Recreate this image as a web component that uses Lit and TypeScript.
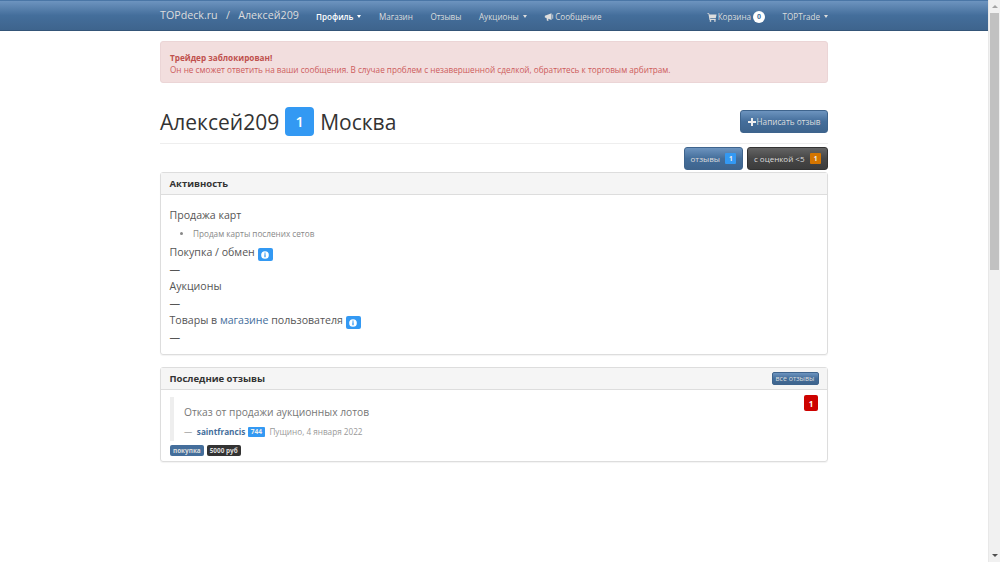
import { LitElement, html, css } from "lit";
import { customElement } from "lit/decorators.js";

const infoIcon = html`<svg class="info-svg" viewBox="0 0 10 10"><circle cx="5" cy="5" r="4.8" fill="#fff"/><rect x="4.2" y="2" width="1.6" height="1.4" fill="#3399f3"/><rect x="4.2" y="4" width="1.6" height="3.8" fill="#3399f3"/></svg>`;

@customElement("app-root")
export class AppRoot extends LitElement {
  static styles = css`
    :host {
      display: block;
      height: 562px;
      overflow: hidden;
      position: relative;
      background: #fff;
      font-family: "Open Sans", sans-serif;
      color: #333;
    }
    .page { width: 988px; }
    .navbar {
      height: 31px;
      box-sizing: border-box;
      background: linear-gradient(#6d94bf, #446e9b 50%, #3e648d);
      border-bottom: 1px solid #345578;
      border-top: 1px solid #4a76a6;
      color: #ddd;
    }
    .nav-inner {
      width: 668px;
      margin: 0 auto;
      display: flex;
      align-items: center;
      height: 100%;
    }
    .brand { font-size: 10.7px; color: #ddd; width: 156px; white-space: pre; margin-bottom: 2px; }
    .nav-link { font-size: 8.1px; color: #ddd; margin-right: 17.5px; padding-top: 2px; display: flex; align-items: center; white-space: pre; }
    .nav-link.active { color: #fff; font-weight: 600; }
    .nav-link.last { margin-right: 0; }
    .caret {
      display: inline-block;
      width: 0;
      height: 0;
      margin-left: 4px;
      border-left: 2.5px solid transparent;
      border-right: 2.5px solid transparent;
      border-top: 3px solid currentColor;
    }
    .spacer { flex: 1; }
    .nav-icon { width: 10px; height: 10px; margin-right: 1px; }
    .cart-badge {
      background: #fff;
      color: #446e9b;
      font-size: 7px;
      font-weight: 700;
      border-radius: 7px;
      width: 12px;
      height: 12px;
      margin-left: 2px;
      display: flex;
      align-items: center;
      justify-content: center;
    }
    .container { width: 668px; margin: 0 auto; }
    .alert {
      margin-top: 10px;
      height: 42px;
      box-sizing: border-box;
      padding: 10px 9px;
      background: #f2dede;
      border: 1px solid #ebd5d6;
      border-radius: 3px;
      color: #cd5c5c;
      font-size: 8.2px;
      line-height: 11.5px;
    }
    .alert b { font-weight: 700; color: #c0504d; display: block; }
    .page-header {
      display: flex;
      justify-content: space-between;
      align-items: flex-start;
      margin-top: 27px;
      height: 33px;
      border-bottom: 1px solid #eee;
    }
    h1 {
      margin: -3px 0 0;
      font-size: 21px;
      font-weight: 400;
      line-height: 20px;
      height: 29px;
      display: flex;
      align-items: center;
      gap: 6px;
      color: #333;
    }
    .h1-badge {
      background: #3399f3;
      color: #fff;
      font-size: 14.5px;
      font-weight: 600;
      width: 29px;
      height: 29px;
      border-radius: 4px;
      display: flex;
      align-items: center;
      justify-content: center;
    }
    .btn {
      box-sizing: border-box;
      background: linear-gradient(#6d94bf, #446e9b 50%, #3e648d);
      border: 1px solid #3e648d;
      color: #ddd;
      border-radius: 3px;
      display: flex;
      align-items: center;
      justify-content: center;
      white-space: pre;
    }
    .btn-write { width: 88px; height: 23px; font-size: 8.2px; }
    .plus { width: 8px; height: 8px; margin-right: 1px; }
    .filters { display: flex; justify-content: flex-end; gap: 4px; margin-top: 3px; }
    .btn-filter { height: 23px; font-size: 8px; gap: 3.5px; }
    .btn-filter.blue { width: 59px; }
    .btn-filter.dark {
      width: 81px;
      background: linear-gradient(#646464, #474747 50%, #3c3c3c);
      border-color: #333;
    }
    .mini-badge {
      font-size: 6.5px;
      font-weight: 700;
      color: #eee;
      width: 11px;
      height: 11px;
      border-radius: 1px;
      display: flex;
      align-items: center;
      justify-content: center;
    }
    .mini-badge.info { background: #3399f3; }
    .mini-badge.warn { background: #d47500; }
    .panel {
      border: 1px solid #ddd;
      border-radius: 3px;
      box-shadow: 0 1px 1px rgba(0, 0, 0, 0.05);
      box-sizing: border-box;
    }
    .panel-head {
      background: #f5f5f5;
      border-bottom: 1px solid #ddd;
      height: 22px;
      box-sizing: border-box;
      padding: 0 8.5px;
      display: flex;
      align-items: center;
      justify-content: space-between;
      font-size: 9.5px;
      font-weight: 700;
      color: #333;
    }
    .activity { margin-top: 2px; height: 183px; }
    .activity-body { padding: 12px 8.5px 0; font-size: 10.6px; color: #555; }
    .row { height: 17px; line-height: 17px; white-space: pre-wrap; }
    .list { margin: 2px 0 0; height: 17.5px; padding-left: 23.5px; font-size: 8.2px; line-height: 16px; color: #888; }
    .dash { height: 17px; line-height: 17px; color: #555; }
    a { color: #446e9b; text-decoration: none; }
    .info-badge {
      background: #3399f3;
      width: 15px;
      height: 13px;
      border-radius: 2px;
      display: inline-flex;
      align-items: center;
      justify-content: center;
      vertical-align: -3px;
    }
    .info-svg { width: 8px; height: 8px; }
    .reviews { margin-top: 12px; height: 95px; position: relative; }
    .btn-all { width: 47px; height: 13px; font-size: 7px; border-radius: 2px; font-weight: 400; }
    .reviews-body { padding: 7px 9px 0; }
    .quote { border-left: 4px solid #eee; padding: 6.5px 0 0 10px; height: 44px; box-sizing: border-box; }
    .quote-text { font-size: 10.25px; line-height: 17px; color: #777; }
    .quote-meta {
      margin-top: 5.5px;
      font-size: 8.2px;
      display: flex;
      align-items: center;
      gap: 2.5px;
      color: #999;
      white-space: pre;
    }
    .quote-meta b { color: #446e9b; font-weight: 700; }
    .meta-badge {
      background: #3399f3;
      color: #eee;
      font-size: 6.5px;
      font-weight: 700;
      width: 17px;
      height: 10px;
      border-radius: 1px;
      display: flex;
      align-items: center;
      justify-content: center;
    }
    .tags { display: flex; gap: 3px; margin-top: 4px; }
    .tag {
      font-size: 6.4px;
      font-weight: 700;
      color: #ddd;
      height: 11px;
      padding: 0 3px;
      border-radius: 2px;
      display: flex;
      align-items: center;
    }
    .tag.blue { background: #446e9b; }
    .tag.dark { background: #333; }
    .score {
      position: absolute;
      top: 27px;
      right: 9px;
      width: 14px;
      height: 16px;
      border-radius: 2px;
      background: #cd0200;
      color: #fff;
      font-size: 8px;
      font-weight: 700;
      display: flex;
      align-items: center;
      justify-content: center;
    }
    .scrollbar {
      position: absolute;
      top: 0;
      right: 0;
      width: 12px;
      height: 562px;
      background: #f1f1f1;
      border-left: 1px solid #e8e8e8;
      box-sizing: border-box;
    }
    .thumb { position: absolute; top: 13px; left: 1px; right: 1px; height: 257px; background: #c1c1c1; }
    .arrow {
      position: absolute;
      left: 3px;
      width: 0;
      height: 0;
      border-left: 3px solid transparent;
      border-right: 3px solid transparent;
    }
    .arrow.up { top: 5px; border-bottom: 3px solid #a3a3a3; }
    .arrow.down { bottom: 5px; border-top: 3px solid #505050; }
  `;

  render() {
    return html`
      <div class="page">
        <nav class="navbar">
          <div class="nav-inner">
            <span class="brand">TOPdeck.ru   /   Алексей209</span>
            <span class="nav-link active">Профиль<i class="caret"></i></span>
            <span class="nav-link">Магазин</span>
            <span class="nav-link">Отзывы</span>
            <span class="nav-link">Аукционы<i class="caret"></i></span>
            <span class="nav-link">
              <svg class="nav-icon" viewBox="0 0 12 12" fill="#ddd"><path d="M1 4.5 L9 1.5 V9.5 L5 8 L5.5 10.5 H3.5 L3 7.2 L1 6.5 Z M10 3 H11 V8 H10 Z"/></svg>Сообщение</span>
            <span class="spacer"></span>
            <span class="nav-link">
              <svg class="nav-icon" viewBox="0 0 12 12" fill="#ddd"><path d="M0.5 1.5 H2.5 L3 3 H11.5 L10.5 7.5 H3.8 L4 8.5 H10.5 V9.5 H3 L1.8 2.5 H0.5 Z"/><circle cx="4.2" cy="10.7" r="1"/><circle cx="9.5" cy="10.7" r="1"/></svg>Корзина<span class="cart-badge">0</span></span>
            <span class="nav-link last">TOPTrade<i class="caret"></i></span>
          </div>
        </nav>
        <main class="container">
          <div class="alert">
            <b>Трейдер заблокирован!</b>
            Он не сможет ответить на ваши сообщения. В случае проблем с незавершенной сделкой, обратитесь к торговым арбитрам.
          </div>
          <header class="page-header">
            <h1>Алексей209 <span class="h1-badge">1</span> Москва</h1>
            <span class="btn btn-write"><svg class="plus" viewBox="0 0 8 8" fill="#eee"><path d="M3 0 H5 V3 H8 V5 H5 V8 H3 V5 H0 V3 H3 Z"/></svg>Написать отзыв</span>
          </header>
          <div class="filters">
            <span class="btn btn-filter blue">отзывы <span class="mini-badge info">1</span></span>
            <span class="btn btn-filter dark">с оценкой &lt;5 <span class="mini-badge warn">1</span></span>
          </div>
          <section class="panel activity">
            <div class="panel-head">Активность</div>
            <div class="activity-body">
              <div class="row">Продажа карт</div>
              <ul class="list"><li>Продам карты послених сетов</li></ul>
              <div class="row">Покупка / обмен <span class="info-badge">${infoIcon}</span></div>
              <div class="dash">—</div>
              <div class="row">Аукционы</div>
              <div class="dash">—</div>
              <div class="row">Товары в <a>магазине</a> пользователя <span class="info-badge">${infoIcon}</span></div>
              <div class="dash">—</div>
            </div>
          </section>
          <section class="panel reviews">
            <div class="panel-head">Последние отзывы<span class="btn btn-all">все отзывы</span></div>
            <div class="reviews-body">
              <div class="quote">
                <div class="quote-text">Отказ от продажи аукционных лотов</div>
                <div class="quote-meta">— <b>saintfrancis</b> <span class="meta-badge">744</span> Пущино, 4 января 2022</div>
              </div>
              <div class="tags">
                <span class="tag blue">покупка</span>
                <span class="tag dark">5000 руб</span>
              </div>
            </div>
            <span class="score">1</span>
          </section>
        </main>
      </div>
      <div class="scrollbar"><i class="arrow up"></i><i class="thumb"></i><i class="arrow down"></i></div>
    `;
  }
}
